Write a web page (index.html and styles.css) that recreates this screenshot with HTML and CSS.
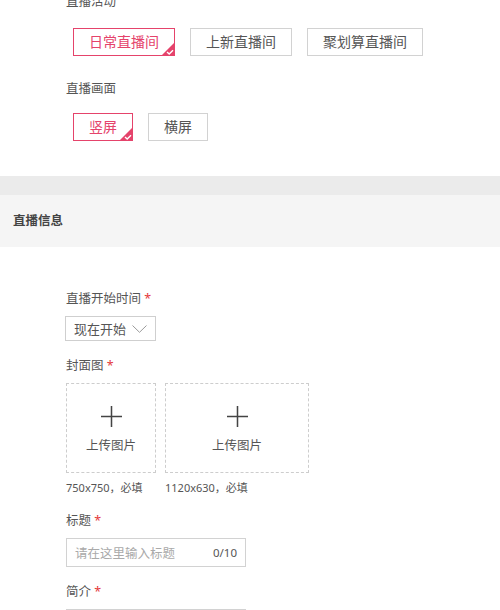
FILE: index.html
```html
<!DOCTYPE html>
<html lang="zh">
<head>
<meta charset="utf-8">
<title>直播信息</title>
<link rel="stylesheet" href="styles.css">
</head>
<body>
<div class="page">
  <section class="top">
    <div class="label first">直播活动</div>
    <div class="options">
      <span class="opt selected">日常直播间<svg class="tick" viewBox="0 0 14 14"><polygon points="14,0 14,14 0,14" fill="#e5436b"/><polyline points="6,10 8.2,12 12,8.2" fill="none" stroke="#fff" stroke-width="1.4"/></svg></span>
      <span class="opt">上新直播间</span>
      <span class="opt">聚划算直播间</span>
    </div>
    <div class="label second">直播画面</div>
    <div class="options second-row">
      <span class="opt selected">竖屏<svg class="tick" viewBox="0 0 14 14"><polygon points="14,0 14,14 0,14" fill="#e5436b"/><polyline points="6,10 8.2,12 12,8.2" fill="none" stroke="#fff" stroke-width="1.4"/></svg></span>
      <span class="opt">横屏</span>
    </div>
  </section>
  <div class="band-dark"></div>
  <div class="band">直播信息</div>
  <section class="form">
    <div class="label">直播开始时间 <span class="star">*</span></div>
    <div class="select">
      <span>现在开始</span>
      <svg class="chev" viewBox="0 0 15 8"><polyline points="0.5,0.5 7.5,7.3 14.5,0.5" fill="none" stroke="#9a9a9a" stroke-width="1"/></svg>
    </div>
    <div class="label gap">封面图 <span class="star">*</span></div>
    <div class="uploads">
      <div class="upload-col">
        <div class="upload square">
          <svg class="plus" viewBox="0 0 22 22"><path d="M11 0V22M0 11H22" stroke="#444" stroke-width="1.6"/></svg>
          <span>上传图片</span>
        </div>
        <div class="caption">750x750，必填</div>
      </div>
      <div class="upload-col">
        <div class="upload wide">
          <svg class="plus" viewBox="0 0 22 22"><path d="M11 0V22M0 11H22" stroke="#444" stroke-width="1.6"/></svg>
          <span>上传图片</span>
        </div>
        <div class="caption">1120x630，必填</div>
      </div>
    </div>
    <div class="label gap2">标题 <span class="star">*</span></div>
    <div class="input">
      <span class="placeholder">请在这里输入标题</span>
      <span class="count">0/10</span>
    </div>
    <div class="label gap">简介 <span class="star">*</span></div>
    <div class="input textarea"></div>
  </section>
</div>
</body>
</html>
```

FILE: styles.css
```css
html, body {
  margin: 0;
  padding: 0;
  background: #fff;
}
body {
  height: 610px;
  overflow: hidden;
  font-family: "Noto Sans", "Noto Sans CJK SC", sans-serif;
  color: #555;
}
.page {
  width: 500px;
}
.top {
  padding: 0 0 35px 66px;
  margin-top: -7px;
}
.label {
  font-size: 12.5px;
  line-height: 18px;
  height: 18px;
  color: #555;
  white-space: nowrap;
}
.label.second {
  margin-top: 24px;
}
.options {
  display: flex;
  gap: 15px;
  margin: 17px 0 0 7px;
}
.options.second-row {
  margin-top: 15px;
}
.opt {
  position: relative;
  box-sizing: border-box;
  height: 28px;
  line-height: 26px;
  padding: 0 15px;
  border: 1px solid #d2d2d2;
  font-size: 14px;
  color: #555;
  white-space: nowrap;
  background: #fff;
}
.opt.selected {
  border-color: #e5436b;
  color: #e5436b;
}
.tick {
  position: absolute;
  right: -1px;
  bottom: -1px;
  width: 14px;
  height: 14px;
  display: block;
}
.band-dark {
  height: 19px;
  background: #ebebeb;
}
.band {
  height: 52px;
  line-height: 52px;
  background: #f5f5f5;
  padding-left: 13px;
  font-size: 12.5px;
  font-weight: bold;
  color: #444;
}
.form {
  padding: 43px 0 0 66px;
}
.star {
  color: #e4393c;
}
.select {
  margin-top: 8px;
  box-sizing: border-box;
  width: 91px;
  height: 25px;
  border: 1px solid #cfcfcf;
  display: flex;
  align-items: center;
  justify-content: space-between;
  padding: 0 8px 0 8px;
  font-size: 13px;
  color: #555;
  margin-left: -1px;
}
.chev {
  width: 15px;
  height: 8px;
  display: block;
}
.label.gap {
  margin-top: 16px;
}
.label.gap2 {
  margin-top: 15px;
}
.uploads {
  display: flex;
  gap: 9px;
  margin-top: 8px;
}
.upload-col {
  display: flex;
  flex-direction: column;
}
.upload {
  box-sizing: border-box;
  height: 90px;
  border: 1px dashed #cdcdcd;
  display: flex;
  flex-direction: column;
  align-items: center;
  font-size: 12.5px;
  color: #555;
}
.upload.square {
  width: 90px;
}
.upload.wide {
  width: 144px;
}
.plus {
  width: 21px;
  height: 21px;
  margin-top: 22px;
  display: block;
}
.upload span {
  margin-top: 11px;
  line-height: 16px;
}
.caption {
  margin-top: 6px;
  font-size: 11px;
  line-height: 18px;
  color: #555;
  white-space: nowrap;
}
.input {
  margin-top: 8px;
  box-sizing: border-box;
  width: 180px;
  height: 29px;
  border: 1px solid #d2d2d2;
  display: flex;
  align-items: center;
  justify-content: space-between;
  padding: 0 8px;
  font-size: 12.5px;
}
.placeholder {
  color: #aaa;
}
.count {
  font-size: 11.5px;
  color: #555;
}
.textarea {
  height: 60px;
}
```
